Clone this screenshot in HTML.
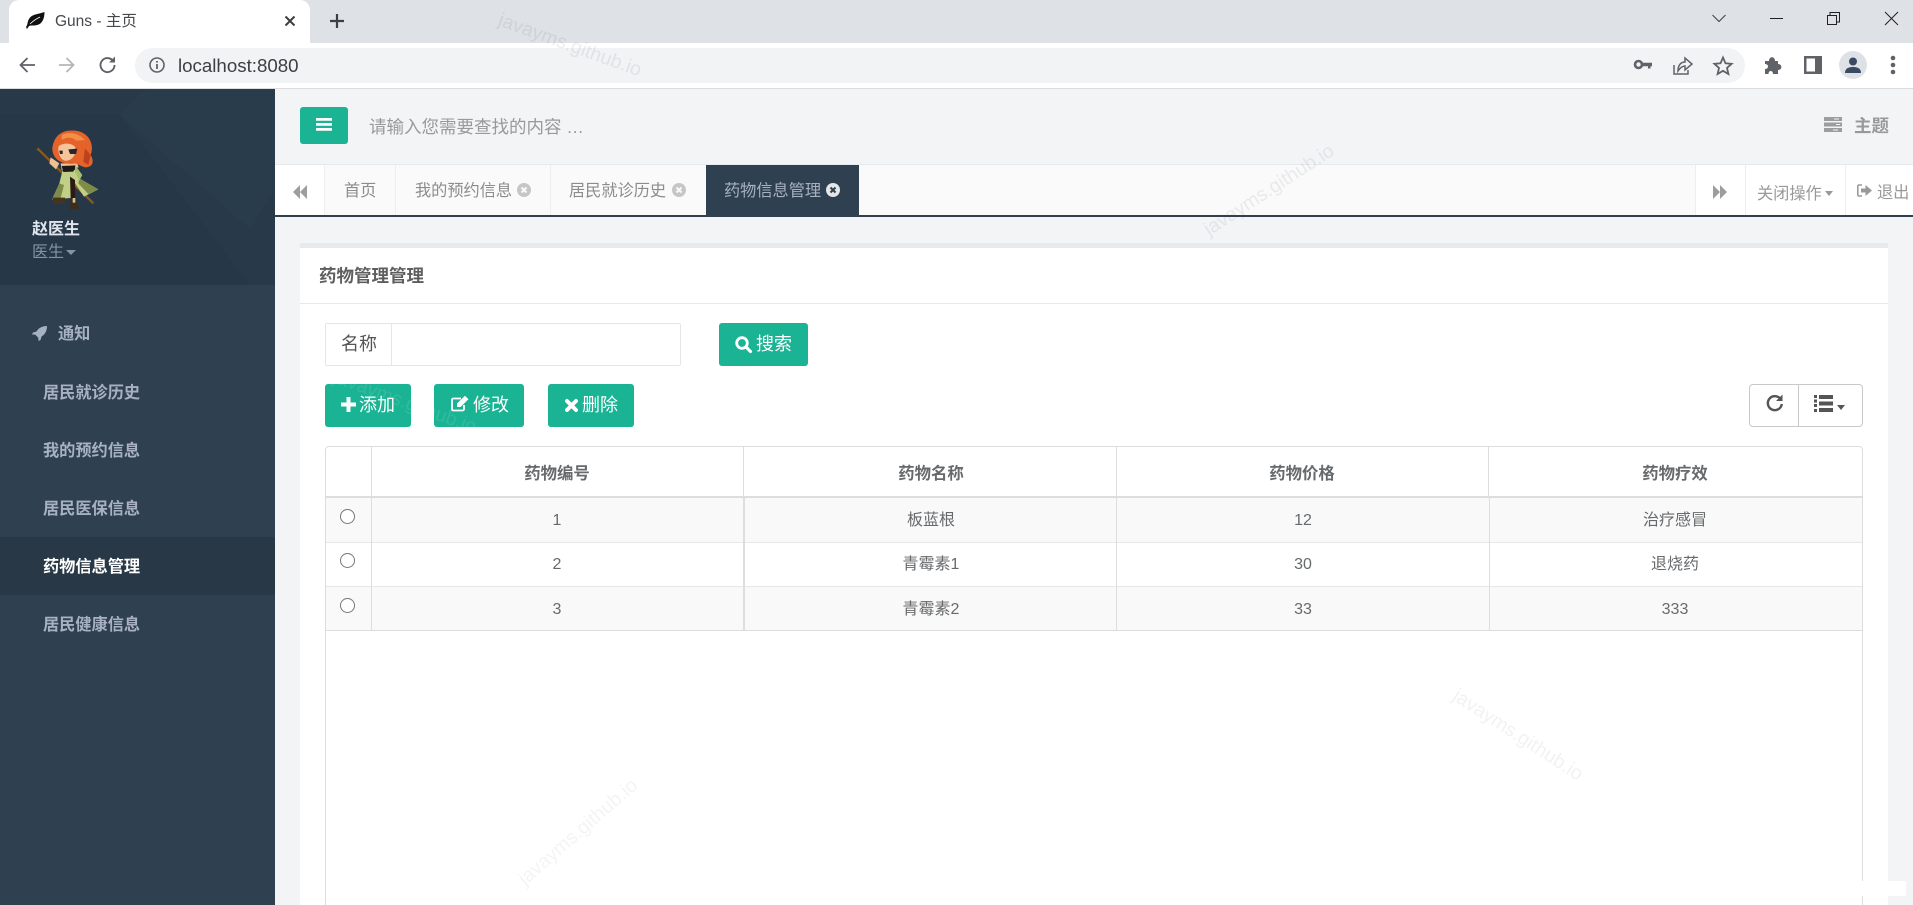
<!DOCTYPE html>
<html lang="zh-CN"><head><meta charset="utf-8"><title>Guns - 主页</title>
<style>
*{box-sizing:border-box;margin:0;padding:0}
html,body{width:1913px;height:905px;overflow:hidden;background:#f3f4f6}
body{position:relative;font-family:"Liberation Sans","Noto Sans CJK SC",sans-serif;color:#676a6c}
.a{position:absolute}
.t{position:absolute;white-space:nowrap}
svg{position:absolute;overflow:visible}
.g{background:#1ab394;border-radius:3px;position:absolute}
.w{color:#fff;font-size:18px;line-height:24px}
.m{color:#a7b1c2;font-size:16.2px;font-weight:700;line-height:24px;left:43px}
.tb{font-size:16.2px;line-height:24px;color:#8a8c8e;top:179px}
.th{font-size:16.4px;line-height:24px;font-weight:700;top:462px;color:#676a6c;transform:translateX(-50%)}
.td{font-size:16px;line-height:24px;transform:translateX(-50%);color:#676a6c}
.wm{position:absolute;white-space:nowrap;font-size:19.5px;line-height:24px;transform:translate(-50%,-50%);color:rgba(60,70,90,.09)}
.l{position:absolute;background:#ddd}
.radio{position:absolute;width:15px;height:15px;border:1px solid #767676;border-radius:50%;left:340px;background:#fff}
</style></head><body>

<!-- browser chrome -->
<div class="a" style="left:0;top:0;width:1913px;height:43px;background:#dee1e6"></div>
<div class="a" style="left:0;top:43px;width:1913px;height:45px;background:#fff"></div>
<div class="a" style="left:0;top:88px;width:1913px;height:1px;background:#dadce0"></div>
<div class="a" style="left:9px;top:0;width:301px;height:43px;background:#fff;border-radius:10px 10px 0 0"></div>
<svg style="left:25px;top:12px" width="20" height="17" viewBox="0 0 20 17"><path d="M1 15C3 13 2 9 5 5.500C8 2 14 2 19.500 0C19.500 6 17.500 12 12 13C9 14 6 13 4 14L2 17Z" fill="#111"/><path d="M5 12C8 9 11 7 15 5" stroke="#fff" stroke-width=".8" fill="none"/></svg>
<div class="t" style="left:55px;top:12px;font-size:15.5px;line-height:20px;color:#45484c">Guns - 主页</div>
<svg style="left:284px;top:15px" width="12" height="12" viewBox="0 0 12 12"><path d="M1.5 1.5L10.500 10.500M10.500 1.500L1.500 10.500" stroke="#3c4043" stroke-width="2"/></svg>
<svg style="left:329px;top:13px" width="16" height="16" viewBox="0 0 16 16"><path d="M8 1V15M1 8H15" stroke="#3c4043" stroke-width="2.200"/></svg>
<svg style="left:19px;top:57px" width="16" height="16" viewBox="0 0 16 16"><path d="M16 8H1.500M8.500 1L1.500 8L8.500 15" stroke="#5f6368" stroke-width="1.800" fill="none"/></svg>
<svg style="left:59px;top:57px" width="16" height="16" viewBox="0 0 16 16"><path d="M0 8H14.500M7.500 1L14.500 8L7.500 15" stroke="#b4b6b9" stroke-width="1.800" fill="none"/></svg>
<svg style="left:99px;top:56px" width="17" height="17" viewBox="0 0 17 17"><path d="M14.500 5.500A7 7 0 1 0 15.500 9" stroke="#5f6368" stroke-width="1.900" fill="none"/><path d="M16 0.500V6.500H10Z" fill="#5f6368"/></svg>
<div class="a" style="left:135px;top:48px;width:1610px;height:35px;border-radius:18px;background:#f1f3f4"></div>
<svg style="left:149px;top:57px" width="16" height="16" viewBox="0 0 16 16"><circle cx="8" cy="8" r="7" stroke="#5f6368" stroke-width="1.600" fill="none"/><path d="M8 7V12M8 4V5.600" stroke="#5f6368" stroke-width="1.800"/></svg>
<div class="t" style="left:178px;top:54px;font-size:18.7px;line-height:24px;color:#3c4043">localhost:8080</div>
<svg style="left:1634px;top:59px" width="18" height="12" viewBox="0 0 18 12"><circle cx="4.500" cy="5.500" r="3.500" stroke="#5f6368" stroke-width="2.600" fill="none"/><path d="M8 3.800H18V7.200H16.500V9.500H14V7.200H8Z" fill="#5f6368"/></svg>
<svg style="left:1673px;top:56px" width="20" height="19" viewBox="0 0 20 19"><path d="M1 9V18H15V14" stroke="#5f6368" stroke-width="1.500" fill="none"/><path d="M5 15C5 9 8 6 12 6V2L19 8L12 14V10C9 10 7 12 5 15Z" stroke="#5f6368" stroke-width="1.500" fill="none"/></svg>
<svg style="left:1713px;top:56px" width="20" height="19" viewBox="0 0 20 19"><path d="M10 1.500L12.500 7.300L18.600 7.800L14 11.900L15.400 18L10 14.800L4.600 18L6 11.900L1.400 7.800L7.500 7.300Z" stroke="#5f6368" stroke-width="1.800" fill="none"/></svg>
<svg style="left:1764px;top:56px" width="18" height="18" viewBox="0 0 18 18"><path d="M1 5H5C5 0 11 0 11 5H14V8C18.500 8 18.500 14 14 14V18H9C9 14 4.500 14 4.500 18H1V13C5 13 5 8 1 8Z" fill="#5f6368"/></svg>
<svg style="left:1804px;top:56px" width="18" height="18" viewBox="0 0 18 18"><path d="M0 0H18V18H0ZM2.500 2.500V15.500H11V2.500Z" fill="#5f6368" fill-rule="evenodd"/></svg>
<div class="a" style="left:1839px;top:51px;width:28px;height:28px;border-radius:50%;background:#dee1e6"></div>
<svg style="left:1845px;top:57px" width="16" height="16" viewBox="0 0 16 16"><circle cx="8" cy="4.500" r="4" fill="#3b4a63"/><path d="M0 16C0 11 4 10 8 10S16 11 16 16Z" fill="#3b4a63"/></svg>
<svg style="left:1890px;top:55px" width="6" height="20" viewBox="0 0 6 20"><circle cx="3" cy="3" r="2.300" fill="#5f6368"/><circle cx="3" cy="10" r="2.300" fill="#5f6368"/><circle cx="3" cy="17" r="2.300" fill="#5f6368"/></svg>
<svg style="left:1712px;top:14px" width="14" height="9" viewBox="0 0 14 9"><path d="M.5 1L7 7.500L13.500 1" stroke="#3c4043" stroke-width="1" fill="none"/></svg>
<div class="a" style="left:1770px;top:18px;width:13px;height:1px;background:#202124"></div>
<svg style="left:1827px;top:12px" width="13" height="13" viewBox="0 0 13 13"><path d="M.5 3.500H9.500V12.500H.5ZM3 3.500V.5H12.500V10H9.500" stroke="#202124" stroke-width="1" fill="none"/></svg>
<svg style="left:1885px;top:12px" width="13" height="13" viewBox="0 0 13 13"><path d="M0 0L13 13M13 0L0 13" stroke="#202124" stroke-width="1"/></svg>

<!-- sidebar -->
<div class="a" style="left:0;top:89px;width:275px;height:816px;background:#2f4050"></div>
<div class="a" style="left:0;top:89px;width:275px;height:196px;background:#283a4a;overflow:hidden">
<svg style="left:0;top:0" width="275" height="196" viewBox="0 0 275 196"><path d="M0 26H120L250 196H0Z" fill="#263748"/><path d="M120 26L145 0H275V100L250 140Z" fill="#293c4c"/></svg>
</div>
<svg style="left:20px;top:120px" width="100" height="100" viewBox="0 0 300 300">
<path d="M52 85L220 250" stroke="#8a5a1e" stroke-width="7"/>
<path d="M128 150L165 150L178 175L235 208L192 230L165 190L152 234L96 238L118 190Z" fill="#c2cf86"/>
<path d="M118 190L96 238L122 234L132 195ZM178 175L235 208L205 222L175 190Z" fill="#7d8c48"/>
<path d="M150 170L165 180L165 235L152 235Z" fill="#2c1a14"/>
<path d="M92 112L118 130L108 148L88 130Z" fill="#f0c090"/>
<path d="M122 130L172 130L176 142L125 150Z" fill="#f0c090"/>
<path d="M125 138L168 136L160 155L130 156Z" fill="#1d1a18"/>
<path d="M165 135L187 165L178 182L165 155Z" fill="#a9bd6e"/>
<path d="M97 85C102 45 128 28 165 32C208 36 224 75 212 105C224 125 218 142 195 142C175 137 168 125 140 130C115 128 97 110 97 85Z" fill="#e5622a"/>
<path d="M125 45C145 35 175 38 195 60L170 62C155 50 140 50 125 60Z" fill="#f39048"/>
<path d="M195 85L212 105L205 135L190 125Z" fill="#b9431c"/>
<path d="M116 78C130 68 155 68 166 82C170 108 152 124 134 122C120 118 112 95 116 78Z" fill="#f4c49a"/>
<path d="M145 88L172 86L168 102L150 102Z" fill="#26262f"/><path d="M118 92L128 92L128 102L120 102Z" fill="#26262f"/>
<path d="M98 233L135 233L135 250L102 254Z" fill="#43351f"/>
<path d="M150 238L174 238L176 268L150 268Z" fill="#3a2e22"/>
<path d="M158 234L166 234L166 248L158 248Z" fill="#d9c08c"/>
</svg>
<div class="t" style="left:32px;top:218px;font-size:16px;line-height:24px;font-weight:700;color:#dfe4ed">赵医生</div>
<div class="t" style="left:32px;top:241px;font-size:16px;line-height:24px;color:#8095a8">医生</div>
<div class="a" style="left:66px;top:250px;border:5px solid transparent;border-top:5px solid #8095a8;border-bottom:0"></div>
<svg style="left:32px;top:326px" width="15" height="15" viewBox="0 0 15 15"><path d="M15 0C10 0 6.500 2 4.500 5.500L1 6.500L0 8.500L3.300 8.600L6.300 11.700L6.500 15L8.500 14L9.500 10.500C13 8.500 15 5 15 0Z" fill="#a7b1c2"/></svg>
<div class="t m" style="left:58px;top:322px">通知</div>
<div class="t m" style="top:381px">居民就诊历史</div>
<div class="t m" style="top:439px">我的预约信息</div>
<div class="t m" style="top:497px">居民医保信息</div>
<div class="a" style="left:0;top:537px;width:275px;height:58px;background:#293846"></div>
<div class="t m" style="top:555px;color:#fff">药物信息管理</div>
<div class="t m" style="top:613px">居民健康信息</div>

<!-- top bar -->
<div class="g" style="left:300px;top:107px;width:48px;height:37px"></div>
<svg style="left:316px;top:118px" width="16" height="13" viewBox="0 0 16 13"><path d="M0 0H16V2.800H0ZM0 5H16V7.800H0ZM0 10H16V12.800H0Z" fill="#fff"/></svg>
<div class="t" style="left:369px;top:115px;font-size:17.500px;line-height:24px;color:#999">请输入您需要查找的内容 …</div>
<svg style="left:1824px;top:117px" width="18" height="15" viewBox="0 0 18 15"><path d="M0 0H18V4H0ZM0 5.500H18V9.500H0ZM0 11H18V15H0Z" fill="#9b9d9f"/><path d="M10 2H15M12 7.500H16M9 13H14" stroke="#f3f4f6" stroke-width="1"/></svg>
<div class="t" style="left:1854px;top:114px;font-size:17.500px;line-height:24px;font-weight:700;color:#999">主题</div>

<!-- tab strip -->
<div class="a" style="left:275px;top:164px;width:1638px;height:51px;background:#fafafa;border-top:1px solid #e7eaec"></div>
<div class="a" style="left:275px;top:165px;width:50px;height:50px;background:#fff;border-right:1px solid #eee"></div>
<div class="a" style="left:395px;top:165px;width:1px;height:50px;background:#eee"></div>
<div class="a" style="left:550px;top:165px;width:1px;height:50px;background:#eee"></div>
<div class="a" style="left:1695px;top:165px;width:218px;height:50px;background:#fff"></div>
<div class="a" style="left:1695px;top:165px;width:1px;height:50px;background:#eee"></div>
<div class="a" style="left:1745px;top:165px;width:1px;height:50px;background:#eee"></div>
<div class="a" style="left:1845px;top:165px;width:1px;height:50px;background:#eee"></div>
<svg style="left:293px;top:185px" width="14" height="14" viewBox="0 0 14 14"><path d="M7 0V14L0 7ZM14 0V14L7 7Z" fill="#9b9d9f"/></svg>
<div class="t tb" style="left:344px">首页</div>
<div class="t tb" style="left:415px">我的预约信息</div>
<svg style="left:517px;top:183px" width="14" height="14" viewBox="0 0 14 14"><circle cx="7" cy="7" r="7" fill="#c4c6c8"/><path d="M4.500 4.500L9.500 9.500M9.500 4.500L4.500 9.500" stroke="#fafafa" stroke-width="2"/></svg>
<div class="t tb" style="left:569px">居民就诊历史</div>
<svg style="left:672px;top:183px" width="14" height="14" viewBox="0 0 14 14"><circle cx="7" cy="7" r="7" fill="#c4c6c8"/><path d="M4.500 4.500L9.500 9.500M9.500 4.500L4.500 9.500" stroke="#fafafa" stroke-width="2"/></svg>
<div class="a" style="left:706px;top:165px;width:153px;height:50px;background:#2f4050"></div>
<div class="t tb" style="left:724px;color:#a7b1c2">药物信息管理</div>
<svg style="left:826px;top:183px" width="14" height="14" viewBox="0 0 14 14"><circle cx="7" cy="7" r="7" fill="#e4e6e8"/><path d="M4.500 4.500L9.500 9.500M9.500 4.500L4.500 9.500" stroke="#2f4050" stroke-width="2"/></svg>
<div class="a" style="left:275px;top:215px;width:1638px;height:2px;background:#2f4050"></div>
<svg style="left:1713px;top:185px" width="14" height="14" viewBox="0 0 14 14"><path d="M0 0V14L7 7ZM7 0V14L14 7Z" fill="#9b9d9f"/></svg>
<div class="t tb" style="left:1757px;top:182px;color:#999">关闭操作</div>
<div class="a" style="left:1825px;top:191px;border:4.500px solid transparent;border-top:5px solid #999;border-bottom:0"></div>
<svg style="left:1857px;top:184px" width="15" height="13" viewBox="0 0 15 13"><path d="M5 1H2C1 1 .8 1.500 .8 2.500V10.500C.8 11.500 1 12 2 12H5" stroke="#999" stroke-width="1.600" fill="none"/><path d="M4 4.500H8.500V1L15 6.500L8.500 12V8.500H4Z" fill="#999"/></svg>
<div class="t tb" style="left:1877px;top:181px;color:#999">退出</div>

<!-- panel -->
<div class="a" style="left:300px;top:243px;width:1588px;height:662px;background:#fff;border-top:5px solid #e7eaec"></div>
<div class="t" style="left:319px;top:264px;font-size:17.500px;line-height:24px;font-weight:700;color:#5e5e5e">药物管理管理</div>
<div class="a" style="left:300px;top:303px;width:1588px;height:1px;background:#e7eaec"></div>

<div class="a" style="left:325px;top:323px;width:356px;height:43px;border:1px solid #e5e6e7;border-radius:2px"></div>
<div class="a" style="left:391px;top:323px;width:1px;height:43px;background:#e5e6e7"></div>
<div class="t" style="left:341px;top:332px;font-size:18px;line-height:24px;color:#555">名称</div>
<div class="g" style="left:719px;top:323px;width:89px;height:43px"></div>
<svg style="left:735px;top:336px" width="17" height="17" viewBox="0 0 17 17"><circle cx="7" cy="7" r="5.300" stroke="#fff" stroke-width="2.800" fill="none"/><path d="M11 11L15.500 15.500" stroke="#fff" stroke-width="3.200" stroke-linecap="round"/></svg>
<div class="t w" style="left:756px;top:332px">搜索</div>

<div class="g" style="left:325px;top:384px;width:86px;height:43px"></div>
<svg style="left:341px;top:397px" width="15" height="15" viewBox="0 0 15 15"><path d="M5.500 0H9.500V5.500H15V9.500H9.500V15H5.500V9.500H0V5.500H5.500Z" fill="#fff"/></svg>
<div class="t w" style="left:359px;top:393px">添加</div>
<div class="g" style="left:434px;top:384px;width:90px;height:43px"></div>
<svg style="left:451px;top:395px" width="19" height="17" viewBox="0 0 19 17"><path d="M13 10V14C13 15 12.500 15.500 11.500 15.500H2.500C1.500 15.500 1 15 1 14V5C1 4 1.500 3.500 2.500 3.500H10" stroke="#fff" stroke-width="1.800" fill="none"/><path d="M6 8.500L14 .8L17.500 4.300L9.500 12H6Z" fill="#fff"/></svg>
<div class="t w" style="left:473px;top:393px">修改</div>
<div class="g" style="left:548px;top:384px;width:86px;height:43px"></div>
<svg style="left:565px;top:399px" width="13" height="13" viewBox="0 0 13 13"><path d="M2 2L11 11M11 2L2 11" stroke="#fff" stroke-width="4" stroke-linecap="round"/></svg>
<div class="t w" style="left:582px;top:393px">删除</div>

<div class="a" style="left:1749px;top:384px;width:114px;height:43px;border:1px solid #c9c9c9;border-radius:4px;background:#fff"></div>
<div class="a" style="left:1798px;top:384px;width:1px;height:43px;background:#c9c9c9"></div>
<svg style="left:1766px;top:394px" width="18" height="18" viewBox="0 0 18 18"><path d="M14.500 5A7 7 0 1 0 15.800 10" stroke="#555" stroke-width="2.400" fill="none"/><path d="M16.500 .5V7H10Z" fill="#555"/></svg>
<svg style="left:1814px;top:395px" width="19" height="17" viewBox="0 0 19 17"><path d="M5 0H19V4H5ZM5 6.500H19V10.500H5ZM5 13H19V17H5ZM0 0H3V3H0ZM0 4.500H3V7.500H0ZM0 9H3V12H0ZM0 14H3V17H0Z" fill="#555"/></svg>
<div class="a" style="left:1837px;top:405px;border:4.500px solid transparent;border-top:5px solid #555;border-bottom:0"></div>

<!-- table -->
<div class="a" style="left:325px;top:446px;width:1538px;height:470px;border:1px solid #ddd;border-radius:4px 4px 0 0"></div>
<div class="a" style="left:326px;top:497px;width:1536px;height:45px;background:#f9f9f9"></div>
<div class="a" style="left:326px;top:586px;width:1536px;height:44px;background:#f9f9f9"></div>
<div class="l" style="left:326px;top:496px;width:1536px;height:2px"></div>
<div class="l" style="left:326px;top:542px;width:1536px;height:1px;background:#e7e7e7"></div>
<div class="l" style="left:326px;top:586px;width:1536px;height:1px;background:#e7e7e7"></div>
<div class="l" style="left:326px;top:630px;width:1536px;height:1px"></div>
<div class="l" style="left:371px;top:447px;width:1px;height:183px"></div>
<div class="l" style="left:743px;top:447px;width:1px;height:183px"></div>
<div class="l" style="left:744px;top:497px;width:1px;height:133px"></div>
<div class="l" style="left:1116px;top:447px;width:1px;height:183px"></div>
<div class="l" style="left:1488px;top:447px;width:1px;height:50px"></div>
<div class="l" style="left:1489px;top:497px;width:1px;height:133px"></div>
<div class="t th" style="left:557px">药物编号</div>
<div class="t th" style="left:931px">药物名称</div>
<div class="t th" style="left:1302px">药物价格</div>
<div class="t th" style="left:1675px">药物疗效</div>
<div class="radio" style="top:509px"></div>
<div class="radio" style="top:553px"></div>
<div class="radio" style="top:598px"></div>
<div class="t td" style="left:557px;top:509px">1</div>
<div class="t td" style="left:931px;top:509px">板蓝根</div>
<div class="t td" style="left:1303px;top:509px">12</div>
<div class="t td" style="left:1675px;top:509px">治疗感冒</div>
<div class="t td" style="left:557px;top:553px">2</div>
<div class="t td" style="left:931px;top:553px">青霉素1</div>
<div class="t td" style="left:1303px;top:553px">30</div>
<div class="t td" style="left:1675px;top:553px">退烧药</div>
<div class="t td" style="left:557px;top:598px">3</div>
<div class="t td" style="left:931px;top:598px">青霉素2</div>
<div class="t td" style="left:1303px;top:598px">33</div>
<div class="t td" style="left:1675px;top:598px">333</div>

<div class="a" style="left:1857px;top:881px;width:49px;height:15px;background:#fff"></div>
<div class="a" style="left:300px;top:896px;width:1588px;height:9px;background:#fff"></div>
<div class="l" style="left:1862px;top:896px;width:1px;height:9px"></div>
<div class="l" style="left:325px;top:896px;width:1px;height:9px"></div>

<!-- watermarks -->
<div class="wm" style="left:570px;top:45px;transform:translate(-50%,-50%) rotate(20deg)">javayms.github.io</div>
<div class="wm" style="left:1269px;top:190px;transform:translate(-50%,-50%) rotate(-33deg)">javayms.github.io</div>
<div class="wm" style="left:1518px;top:735px;transform:translate(-50%,-50%) rotate(33deg);color:rgba(60,70,90,.07)">javayms.github.io</div>
<div class="wm" style="left:578px;top:832px;transform:translate(-50%,-50%) rotate(-41deg);color:rgba(60,70,90,.06)">javayms.github.io</div>
<div class="wm" style="left:405px;top:402px;transform:translate(-50%,-50%) rotate(20deg);color:rgba(255,255,255,.1)">javayms.github.io</div>
</body></html>
